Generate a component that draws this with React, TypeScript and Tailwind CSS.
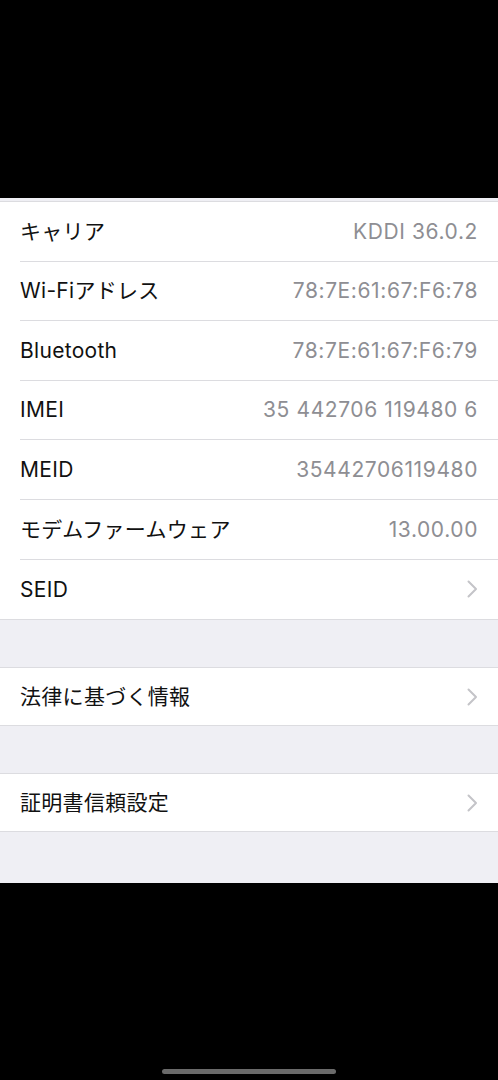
import React from 'react';

type Row = { label: string; value?: string; chevron?: boolean };

const infoRows: Row[] = [
  { label: 'キャリア', value: 'KDDI 36.0.2' },
  { label: 'Wi-Fiアドレス', value: '78:7E:61:67:F6:78' },
  { label: 'Bluetooth', value: '78:7E:61:67:F6:79' },
  { label: 'IMEI', value: '35 442706 119480 6' },
  { label: 'MEID', value: '35442706119480' },
  { label: 'モデムファームウェア', value: '13.00.00' },
  { label: 'SEID', chevron: true },
];

function Chevron() {
  return (
    <svg width="11" height="18" viewBox="0 0 11 18" className="shrink-0">
      <path d="M1.5 1.5 L9 9 L1.5 16.5" fill="none" stroke="#c4c4c8" strokeWidth="2" strokeLinecap="round" strokeLinejoin="round" />
    </svg>
  );
}

function Cell({ row, last, height }: { row: Row; last: boolean; height: string }) {
  return (
    <div className={`flex items-stretch pl-5 ${height}`}>
      <div className={`flex flex-1 items-center justify-between pr-5 ${last ? '' : 'border-b border-[#dcdce0]'}`}>
        <span className="text-[21px] tracking-[0.3px] text-[#111]">{row.label}</span>
        {row.value && <span className="text-[21px] tracking-[0.6px] text-[#8e8e93]">{row.value}</span>}
        {row.chevron && <Chevron />}
      </div>
    </div>
  );
}

export default function App() {
  return (
    <div
      className="flex h-[1080px] w-[498px] flex-col bg-black"
      style={{ fontFamily: 'Inter, "Noto Sans CJK JP", sans-serif' }}
    >
      <div className="h-[198px] shrink-0" />

      <div className="flex flex-col bg-[#efeff4]">
        <div className="h-[3px]" />

        {/* device info */}
        <div className="border-y border-[#dcdce0] bg-white">
          {infoRows.map((r, i) => (
            <Cell key={r.label} row={r} last={i === infoRows.length - 1} height="h-[59.6px]" />
          ))}
        </div>

        <div className="h-[47px]" />
        <div className="border-y border-[#dcdce0] bg-white">
          <Cell row={{ label: '法律に基づく情報', chevron: true }} last height="h-[57px]" />
        </div>

        <div className="h-[47px]" />
        <div className="border-y border-[#dcdce0] bg-white">
          <Cell row={{ label: '証明書信頼設定', chevron: true }} last height="h-[57px]" />
        </div>

        <div className="h-[51px]" />
      </div>

      <div className="flex flex-1 items-end justify-center pb-[6px]">
        <div className="h-[5px] w-[174px] rounded-full bg-[#6a6a6a]" />
      </div>
    </div>
  );
}
